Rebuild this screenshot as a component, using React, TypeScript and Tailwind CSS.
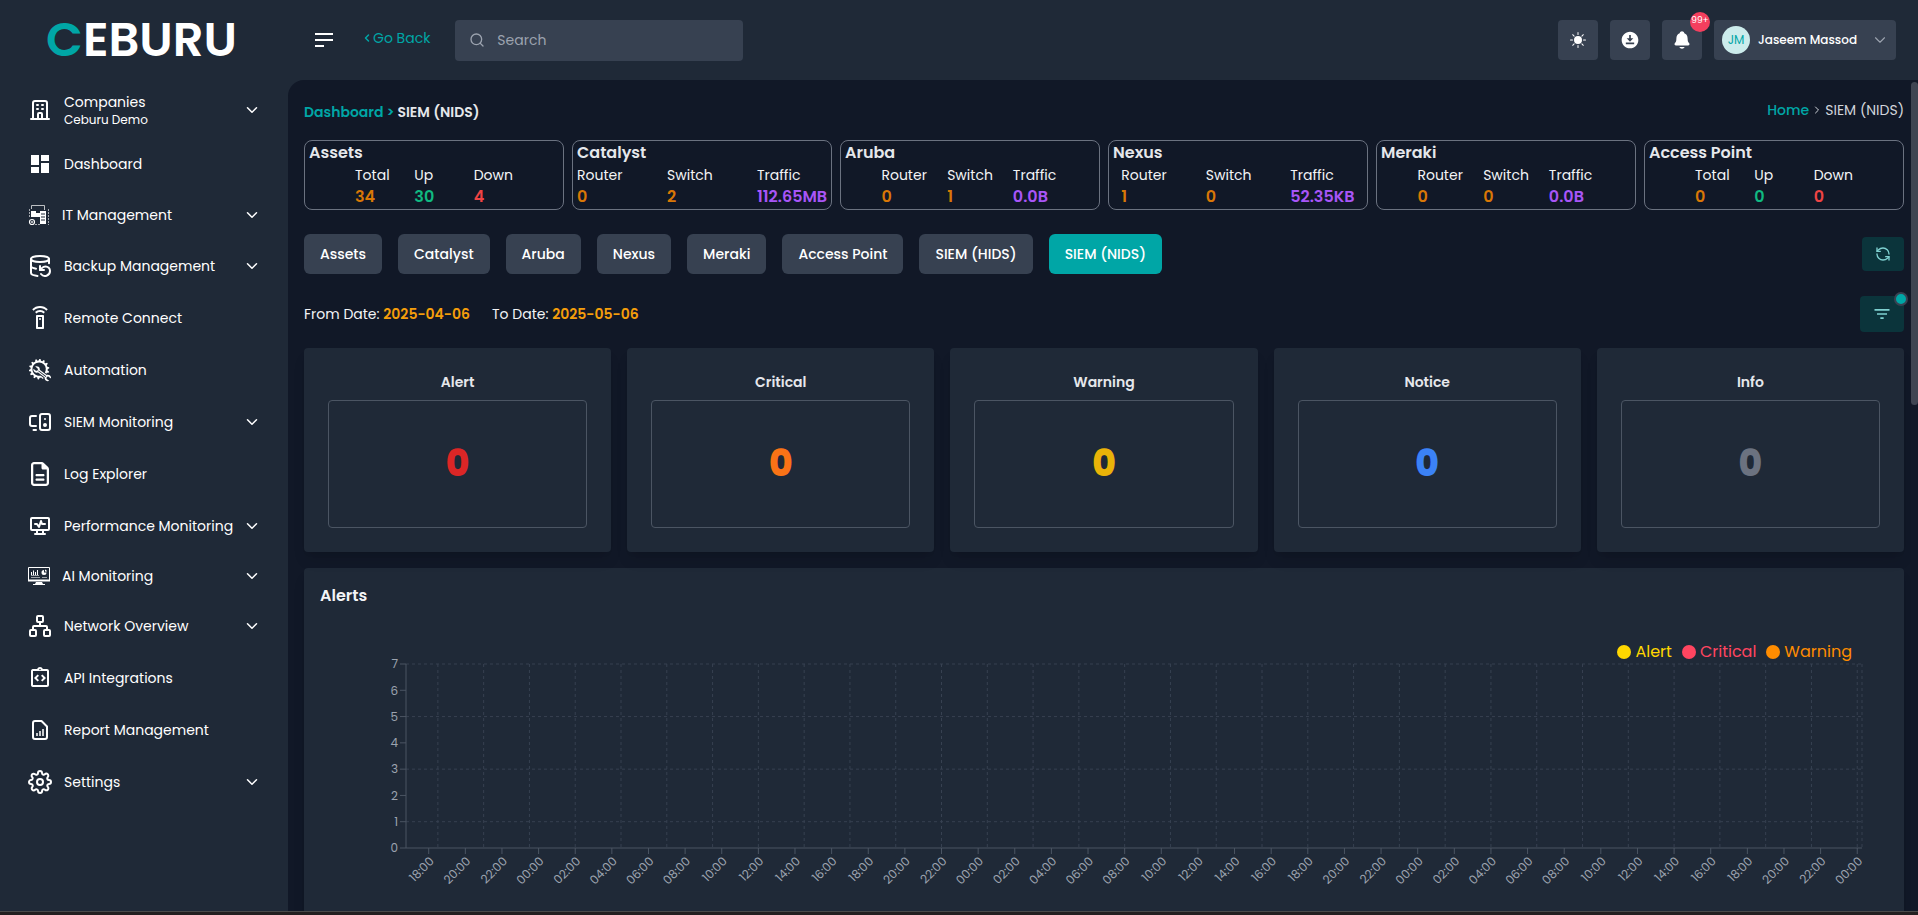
import { useLayoutEffect, useRef, useState } from 'react';
import type { ReactNode } from 'react';
import { BsSunFill } from 'react-icons/bs';
import { FaRegFileLines } from 'react-icons/fa6';
import { FiSettings } from 'react-icons/fi';
import { GiAutoRepair } from 'react-icons/gi';
import { HiOutlineOfficeBuilding } from 'react-icons/hi';
import { IoNotifications } from 'react-icons/io5';
import {
  MdDashboard,
  MdDownloadForOffline,
  MdFilterList,
  MdOutlineIntegrationInstructions,
  MdOutlineSettingsRemote,
} from 'react-icons/md';
import { TbHeartRateMonitor } from 'react-icons/tb';
import { ChevronDown, ChevronLeft, ChevronRight, DatabaseBackup, MonitorSpeaker, Network, RefreshCcw, Search } from 'lucide-react';

function ServersIcon() {
  return (
    <svg viewBox="1 0 22 24" className="h-6 w-[22px] shrink-0" fill="none" stroke="currentColor">
      <path d="M4.5 6V2.5h13V7" strokeWidth="1" opacity="0.7" />
      <path d="M2.5 6v9M21.5 6v16M8 21.5h5" strokeWidth="1" strokeDasharray="2 1" opacity="0.6" />
      <path d="M4 8h5v6H4zM9 10h4v4H9z" fill="currentColor" stroke="none" />
      <path d="M13 8h6v13h-6z" fill="currentColor" stroke="none" />
      <path d="M14 11h4M14 14h4M14 17h4" stroke="#1f2937" strokeWidth="1" />
      <circle cx="5" cy="19" r="2.5" strokeWidth="1.2" />
      <path d="M4 19h2M5 18v2" strokeWidth="0.8" />
    </svg>
  );
}

function AnalyticsScreenIcon() {
  return (
    <svg viewBox="1 0 22 24" className="h-6 w-[22px] shrink-0" fill="none" stroke="currentColor">
      <path d="M1.5 3.5h21v13h-21z" strokeWidth="1" />
      <path d="M1 15.5h22v2H1zM9 18h6l1 2H8zM6 20h12v1H6z" fill="currentColor" stroke="none" />
      <path d="M4.5 11V8M6.5 11V6.5M8.5 11V8M10.5 11V6" strokeWidth="1" />
      <path d="M4 11.5h8M4 13.5h9M15 13.5h5" strokeWidth="0.7" opacity="0.8" />
      <path d="M17 6a2.5 2.5 0 1 0 2.5 2.5H17z" fill="currentColor" stroke="none" />
      <path d="M18 5.5a2.5 2.5 0 0 1 2 2h-2z" fill="currentColor" stroke="none" />
    </svg>
  );
}

function ReportIcon() {
  return (
    <svg viewBox="0 0 24 24" className="size-6 shrink-0" fill="none" stroke="currentColor" strokeWidth="2" strokeLinejoin="round">
      <path d="M7 3h6.5L19 8.5V19a2 2 0 0 1-2 2H7a2 2 0 0 1-2-2V5a2 2 0 0 1 2-2z" />
      <path d="M9 18v-3M12 18v-5M15 18v-7" strokeWidth="1.5" />
    </svg>
  );
}

type NavItem = { label: string; sub?: string; icon: ReactNode; expandable?: boolean; row: string };

const NAV: NavItem[] = [
  { label: 'Companies', sub: 'Ceburu Demo', icon: <HiOutlineOfficeBuilding className="size-6 shrink-0" />, expandable: true, row: 'h-14' },
  { label: 'Dashboard', icon: <MdDashboard className="size-6 shrink-0" />, row: 'h-13' },
  { label: 'IT Management', icon: <ServersIcon />, expandable: true, row: 'h-[50px]' },
  { label: 'Backup Management', icon: <DatabaseBackup className="size-6 shrink-0" />, expandable: true, row: 'h-13' },
  { label: 'Remote Connect', icon: <MdOutlineSettingsRemote className="size-6 shrink-0" />, row: 'h-13' },
  { label: 'Automation', icon: <GiAutoRepair className="size-6 shrink-0" />, row: 'h-13' },
  { label: 'SIEM Monitoring', icon: <MonitorSpeaker className="size-6 shrink-0" />, expandable: true, row: 'h-13' },
  { label: 'Log Explorer', icon: <FaRegFileLines className="size-6 shrink-0" />, row: 'h-13' },
  { label: 'Performance Monitoring', icon: <TbHeartRateMonitor className="size-6 shrink-0" />, expandable: true, row: 'h-13' },
  { label: 'AI Monitoring', icon: <AnalyticsScreenIcon />, expandable: true, row: 'h-12' },
  { label: 'Network Overview', icon: <Network className="size-6 shrink-0" />, expandable: true, row: 'h-13' },
  { label: 'API Integrations', icon: <MdOutlineIntegrationInstructions className="size-6 shrink-0" />, row: 'h-13' },
  { label: 'Report Management', icon: <ReportIcon />, row: 'h-13' },
  { label: 'Settings', icon: <FiSettings className="size-6 shrink-0" />, expandable: true, row: 'h-13' },
];

const ORANGE = 'text-[#d97706]';
const GREEN = 'text-[#10b981]';
const RED = 'text-[#ef4444]';
const PURPLE = 'text-[#a855f7]';

const SUMMARY = [
  { title: 'Assets', cols: [['Total', '34', ORANGE], ['Up', '30', GREEN], ['Down', '4', RED]] },
  { title: 'Catalyst', cols: [['Router', '0', ORANGE], ['Switch', '2', ORANGE], ['Traffic', '112.65MB', PURPLE]] },
  { title: 'Aruba', cols: [['Router', '0', ORANGE], ['Switch', '1', ORANGE], ['Traffic', '0.0B', PURPLE]] },
  { title: 'Nexus', cols: [['Router', '1', ORANGE], ['Switch', '0', ORANGE], ['Traffic', '52.35KB', PURPLE]] },
  { title: 'Meraki', cols: [['Router', '0', ORANGE], ['Switch', '0', ORANGE], ['Traffic', '0.0B', PURPLE]] },
  { title: 'Access Point', cols: [['Total', '0', ORANGE], ['Up', '0', GREEN], ['Down', '0', RED]] },
];

const TABS = ['Assets', 'Catalyst', 'Aruba', 'Nexus', 'Meraki', 'Access Point', 'SIEM (HIDS)', 'SIEM (NIDS)'];

const SEVERITIES = [
  { label: 'Alert', count: 0, color: 'text-[#dc2626]' },
  { label: 'Critical', count: 0, color: 'text-[#f97316]' },
  { label: 'Warning', count: 0, color: 'text-[#eab308]' },
  { label: 'Notice', count: 0, color: 'text-[#3b82f6]' },
  { label: 'Info', count: 0, color: 'text-[#6b7280]' },
];

const LEGEND = [
  { label: 'Alert', text: 'text-[#ffd700]', dot: 'bg-[#ffd700]' },
  { label: 'Critical', text: 'text-[#ff4560]', dot: 'bg-[#ff4560]' },
  { label: 'Warning', text: 'text-[#ff8c00]', dot: 'bg-[#ff8c00]' },
];

function Sidebar() {
  return (
    <aside className="w-72 shrink-0 bg-[#1f2937]">
      <a href="#" aria-label="Ceburu" className="flex h-20 items-center pl-[46px] text-5xl leading-none font-semibold text-white">
        <span className="text-[#00a6a6]">C</span>EBURU
      </a>
      <nav className="pt-0.5">
        {NAV.map((item) => (
          <a key={item.label} href="#" className={`flex items-center gap-3 pr-[27px] pl-7 text-white ${item.row}`}>
            {item.icon}
            <span className="min-w-0 flex-1 text-sm leading-5 whitespace-nowrap">
              {item.label}
              {item.sub && <span className="block text-xs leading-4">{item.sub}</span>}
            </span>
            {item.expandable && <ChevronDown className="size-[18px] shrink-0" />}
          </a>
        ))}
      </nav>
    </aside>
  );
}

function Header() {
  return (
    <header className="flex h-20 shrink-0 items-center bg-[#1f2937] pr-[22px] pl-[27px]">
      <button type="button" aria-label="Toggle menu" className="text-white">
        <svg viewBox="0 0 18 14" className="h-3.5 w-[18px]" fill="currentColor">
          <path d="M0 0h18v2H0zM0 6h18v2H0zM0 12h9v2H0z" />
        </svg>
      </button>
      <a href="#" className="ml-7 flex items-center pb-1 text-sm text-[#00a6a6]">
        <ChevronLeft className="size-3" strokeWidth={3} />
        Go Back
      </a>
      <label className="ml-[25px] flex h-[41px] w-72 items-center gap-3 rounded bg-[#374151] px-3.5">
        <Search className="size-4 shrink-0 text-[#9ca3af]" />
        <input type="search" aria-label="Search" placeholder="Search" className="w-full bg-transparent text-sm text-white outline-none placeholder:text-[#9ca3af]" />
      </label>

      <div className="ml-auto flex items-center gap-3 text-white">
        <button type="button" aria-label="Light mode" className="flex size-10 items-center justify-center rounded bg-[#374151]">
          <BsSunFill className="size-4" />
        </button>
        <button type="button" aria-label="Downloads" className="flex size-10 items-center justify-center rounded bg-[#374151]">
          <MdDownloadForOffline className="size-5" />
        </button>
        <button type="button" aria-label="Notifications" className="relative flex size-10 items-center justify-center rounded bg-[#374151]">
          <IoNotifications className="size-5" />
          <span className="absolute -top-2 -right-2 flex size-5 items-center justify-center rounded-full bg-[#f43f5e] pb-0.5 text-[9px]">99+</span>
        </button>
        <button type="button" className="flex h-10 w-[182px] items-center gap-2 rounded bg-[#374151] pr-[7px] pl-2 text-xs font-medium whitespace-nowrap">
          <span className="flex size-7 items-center justify-center rounded-full bg-[#ccecec] font-normal text-[#00a6a6]">JM</span>
          Jaseem Massod
          <ChevronDown className="ml-auto size-[18px] text-[#9ca3af]" strokeWidth={1.5} />
        </button>
      </div>
    </header>
  );
}

function SummaryCard({ title, cols }: { title: string; cols: string[][] }) {
  return (
    <div className="rounded-lg border border-[#6b7280] px-1">
      <h2 className="text-base leading-6 font-semibold text-[#e5e7eb]">{title}</h2>
      <dl className="mx-auto grid w-fit grid-cols-3 gap-x-5">
        {cols.map(([label, value, color]) => (
          <div key={label}>
            <dt className="text-sm leading-5 text-[#f3f4f6]">{label}</dt>
            <dd className={`text-base leading-6 font-semibold ${color}`}>{value}</dd>
          </div>
        ))}
      </dl>
    </div>
  );
}

// Plot area, in px. The x axis spans 79.5 hours, starting at about 16:45.
const PLOT = { left: 86, right: 26, top: 24, bottom: 208 };
const SPAN = 79.5;
const X_TICKS = Array.from({ length: 40 }, (_, i) => ({
  hour: 1.24 + i * 2,
  label: `${String((18 + i * 2) % 24).padStart(2, '0')}:00`,
}));
const X_GRID = [...Array.from({ length: 32 }, (_, i) => 1.74 + i * 2.5), SPAN];

function AlertsChart() {
  const box = useRef<HTMLDivElement>(null);
  const [width, setWidth] = useState(1568);

  useLayoutEffect(() => {
    const el = box.current;
    if (!el) return;
    const measure = () => setWidth(el.clientWidth);
    measure();
    const observer = new ResizeObserver(measure);
    observer.observe(el);
    return () => observer.disconnect();
  }, []);

  const right = width - PLOT.right;
  const x = (hour: number) => PLOT.left + (hour / SPAN) * (right - PLOT.left);
  const y = (value: number) => PLOT.bottom - (value / 7) * (PLOT.bottom - PLOT.top);

  return (
    <div ref={box} className="relative h-72">
      <svg width={width} height="288" className="block text-xs" role="img" aria-label="Alerts over time">
        <g stroke="#374151" strokeDasharray="3 3">
          {[1, 3, 5, 7].map((v) => (
            <line key={v} x1={PLOT.left} x2={right} y1={y(v)} y2={y(v)} />
          ))}
          {X_GRID.map((h) => (
            <line key={h} x1={x(h)} x2={x(h)} y1={PLOT.top} y2={PLOT.bottom} />
          ))}
        </g>
        <g stroke="#4b5563">
          <line x1={PLOT.left} x2={PLOT.left} y1={PLOT.top} y2={PLOT.bottom} />
          <line x1={PLOT.left} x2={right} y1={PLOT.bottom} y2={PLOT.bottom} />
          {[0, 1, 2, 3, 4, 5, 6, 7].map((v) => (
            <line key={v} x1={PLOT.left - 6} x2={PLOT.left} y1={y(v)} y2={y(v)} />
          ))}
          {X_TICKS.map((t) => (
            <line key={t.hour} x1={x(t.hour)} x2={x(t.hour)} y1={PLOT.bottom} y2={PLOT.bottom + 6} />
          ))}
        </g>
        <g fill="#9ca3af" textAnchor="end">
          {[0, 1, 2, 3, 4, 5, 6, 7].map((v) => (
            <text key={v} x={PLOT.left - 8} y={y(v)} dy="0.355em">
              {v}
            </text>
          ))}
          {X_TICKS.map((t) => (
            <text key={t.hour} x={x(t.hour)} y={PLOT.bottom + 8} dy="0.71em" transform={`rotate(-45, ${x(t.hour)}, ${PLOT.bottom + 8})`}>
              {t.label}
            </text>
          ))}
        </g>
      </svg>
      <ul className="absolute top-0 right-9 flex gap-2.5">
        {LEGEND.map((item) => (
          <li key={item.label} className={`flex items-center gap-1 text-base leading-6 ${item.text}`}>
            <span className={`size-3.5 rounded-full ${item.dot}`} />
            {item.label}
          </li>
        ))}
      </ul>
    </div>
  );
}

export default function App() {
  return (
    <div className="flex h-screen flex-col overflow-hidden bg-[#1f2937] font-['Poppins','Inter',sans-serif]">
      <div className="flex min-h-0 flex-1">
        <Sidebar />
        <div className="flex min-w-0 flex-1 flex-col">
          <Header />
          <div className="flex min-h-0 flex-1 overflow-hidden rounded-tl-2xl bg-[#111827]">
            <main className="min-w-0 flex-1 overflow-hidden pr-[7px] pl-4">
              <div className="flex h-15 items-center justify-between text-sm">
                <div className="flex items-center gap-[3px] pt-1 font-semibold">
                  <a href="#" className="text-[#00a6a6]">Dashboard</a>
                  <span className="text-[#00a6a6]">&gt;</span>
                  <span className="text-[#e5e7eb]">SIEM (NIDS)</span>
                </div>
                <nav aria-label="Breadcrumb" className="flex items-center gap-0.5 text-[#d1d5db]">
                  <a href="#" className="font-medium text-[#00a6a6]">Home</a>
                  <ChevronRight className="size-3" />
                  <span>SIEM (NIDS)</span>
                </nav>
              </div>

              <section className="grid grid-cols-6 gap-2">
                {SUMMARY.map((card) => (
                  <SummaryCard key={card.title} title={card.title} cols={card.cols} />
                ))}
              </section>

              <div className="mt-6 flex items-center justify-between">
                <div className="flex gap-4">
                  {TABS.map((tab) => (
                    <button
                      key={tab}
                      type="button"
                      className={`h-10 rounded-md px-4 text-sm font-medium text-white ${tab === 'SIEM (NIDS)' ? 'bg-[#00a6a6]' : 'bg-[#374151]'}`}
                    >
                      {tab}
                    </button>
                  ))}
                </div>
                <button type="button" aria-label="Refresh" className="flex h-[34px] w-[42px] items-center justify-center rounded bg-[#0b343b] text-[#7fd1d1]">
                  <RefreshCcw className="size-4" />
                </button>
              </div>

              <div className="mt-[22px] flex items-center justify-between text-sm text-[#f3f4f6]">
                <div className="flex gap-[22px]">
                  <p>From Date: <span className="font-semibold text-[#f59e0b]">2025-04-06</span></p>
                  <p>To Date: <span className="font-semibold text-[#f59e0b]">2025-05-06</span></p>
                </div>
                <button type="button" aria-label="Filter" className="relative flex h-9 w-11 items-center justify-center rounded bg-[#0b343b] text-[#7fd1d1]">
                  <MdFilterList className="size-5" />
                  <span className="absolute -top-1 -right-1 size-3.5 rounded-full border-2 border-[#374151] bg-[#00a6a6]" />
                </button>
              </div>

              <section className="mt-4 grid grid-cols-5 gap-4">
                {SEVERITIES.map((s) => (
                  <div key={s.label} className="rounded bg-[#1f2937] p-6 text-center shadow-lg">
                    <h3 className="mb-2 text-sm leading-5 font-semibold text-[#e5e7eb]">{s.label}</h3>
                    <p className={`flex h-32 items-center justify-center rounded border border-[#4b5563] text-4xl font-extrabold ${s.color}`}>{s.count}</p>
                  </div>
                ))}
              </section>

              <section className="mt-4 rounded bg-[#1f2937] p-4 shadow-lg">
                <h2 className="mb-8 text-base leading-6 font-semibold text-[#f3f4f6]">Alerts</h2>
                <AlertsChart />
              </section>
            </main>
            <div className="w-[7px] shrink-0 pt-0.5">
              <div className="h-[39%] rounded-full bg-[#3f4552]" />
            </div>
          </div>
        </div>
      </div>
      <div className="h-1 shrink-0 border-t border-[#4a4a4a] bg-[#231f20]" />
    </div>
  );
}
